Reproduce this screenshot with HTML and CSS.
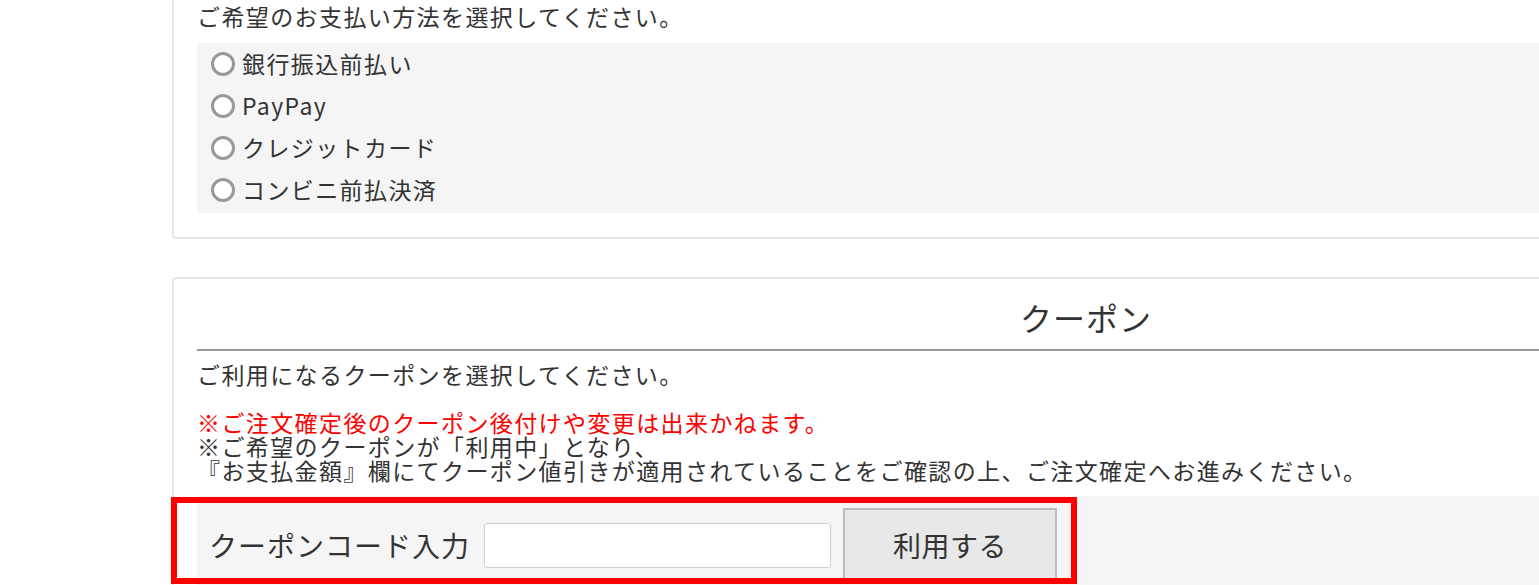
FILE: index.html
```html
<!DOCTYPE html>
<html lang="ja">
<head>
<meta charset="utf-8">
<title>お支払い方法・クーポン</title>
<link rel="stylesheet" href="styles.css">
</head>
<body>
<div class="page">
  <section class="card card-pay">
    <p class="lead">ご希望のお支払い方法を選択してください。</p>
    <ul class="options">
      <li class="option"><input type="radio" name="pay" class="radio"><span>銀行振込前払い</span></li>
      <li class="option"><input type="radio" name="pay" class="radio"><span>PayPay</span></li>
      <li class="option"><input type="radio" name="pay" class="radio"><span>クレジットカード</span></li>
      <li class="option"><input type="radio" name="pay" class="radio"><span>コンビニ前払決済</span></li>
    </ul>
  </section>

  <section class="card card-coupon">
    <h2 class="card-title">クーポン</h2>
    <div class="notes">
      <p class="note-lead">ご利用になるクーポンを選択してください。</p>
      <p class="note-warn">※ご注文確定後のクーポン後付けや変更は出来かねます。</p>
      <p class="note">※ご希望のクーポンが「利用中」となり、<br>『お支払金額』欄にてクーポン値引きが適用されていることをご確認の上、ご注文確定へお進みください。</p>
    </div>
    <div class="coupon-form">
      <label class="coupon-label" for="code">クーポンコード入力</label>
      <input id="code" class="coupon-input" type="text">
      <button class="coupon-btn" type="button">利用する</button>
      <div class="highlight"></div>
    </div>
  </section>
</div>
</body>
</html>
```

FILE: styles.css
```css
html, body {
  margin: 0;
  padding: 0;
  overflow: hidden;
  background: #fff;
}

body {
  font-family: "Noto Sans CJK JP", "Noto Sans", sans-serif;
  color: #333;
  font-size: 23px;
  letter-spacing: 1.4px;
  line-height: 24px;
}

.page {
  padding-left: 172px;
  width: 1828px;
}

.card {
  box-sizing: border-box;
  width: 1828px;
  border: 2px solid #e6e6e6;
  border-radius: 4px;
  padding: 0 23px;
  background: #fff;
}

.card-pay {
  margin-top: -22px;
  padding-top: 24px;
  padding-bottom: 24px;
}

.lead {
  margin: 0 0 15px;
}

.options {
  list-style: none;
  margin: 0;
  padding: 0 0 2px;
  background: #f5f5f5;
}

.option {
  height: 42px;
  display: flex;
  align-items: center;
  padding-left: 14px;
}

.option span {
  position: relative;
  top: -1px;
}

.radio {
  appearance: none;
  -webkit-appearance: none;
  box-sizing: border-box;
  width: 24px;
  height: 24px;
  margin: 0 7px 0 0;
  border: 3px solid #999;
  border-radius: 50%;
  background: #fff;
}

.card-coupon {
  margin-top: 38px;
  padding-top: 18px;
  padding-bottom: 20px;
}

.card-title {
  margin: 0;
  font-weight: normal;
  font-size: 32px;
  letter-spacing: 1px;
  line-height: 40px;
  text-align: center;
  padding-bottom: 12px;
  border-bottom: 2px solid #999;
}

.notes {
  margin-top: 11px;
}

.notes p {
  margin: 0;
}

.note-lead {
  margin-bottom: 24px !important;
}

.note-warn {
  color: #ff0000;
}

.coupon-form {
  position: relative;
  margin-top: 14px;
  display: flex;
  align-items: center;
  padding: 12px 14px;
  background: #f5f5f5;
}

.coupon-label {
  font-size: 28px;
  letter-spacing: 1px;
  line-height: 40px;
  margin-left: -2px;
}

.coupon-input {
  box-sizing: border-box;
  width: 347px;
  height: 45px;
  margin-left: 14px;
  border: 1.5px solid #cfcfcf;
  border-radius: 3px;
  background: #fff;
}

.coupon-btn {
  box-sizing: border-box;
  width: 214px;
  height: 74px;
  margin-left: 12px;
  border: 2px solid #bdbdbd;
  background: #e8e8e8;
  color: #333;
  font-family: inherit;
  font-size: 28px;
  letter-spacing: 0.5px;
  padding: 0;
}

.highlight {
  position: absolute;
  left: -26px;
  top: 1px;
  width: 906px;
  height: 87px;
  box-sizing: border-box;
  border: 6px solid #ff0000;
  pointer-events: none;
}
```
